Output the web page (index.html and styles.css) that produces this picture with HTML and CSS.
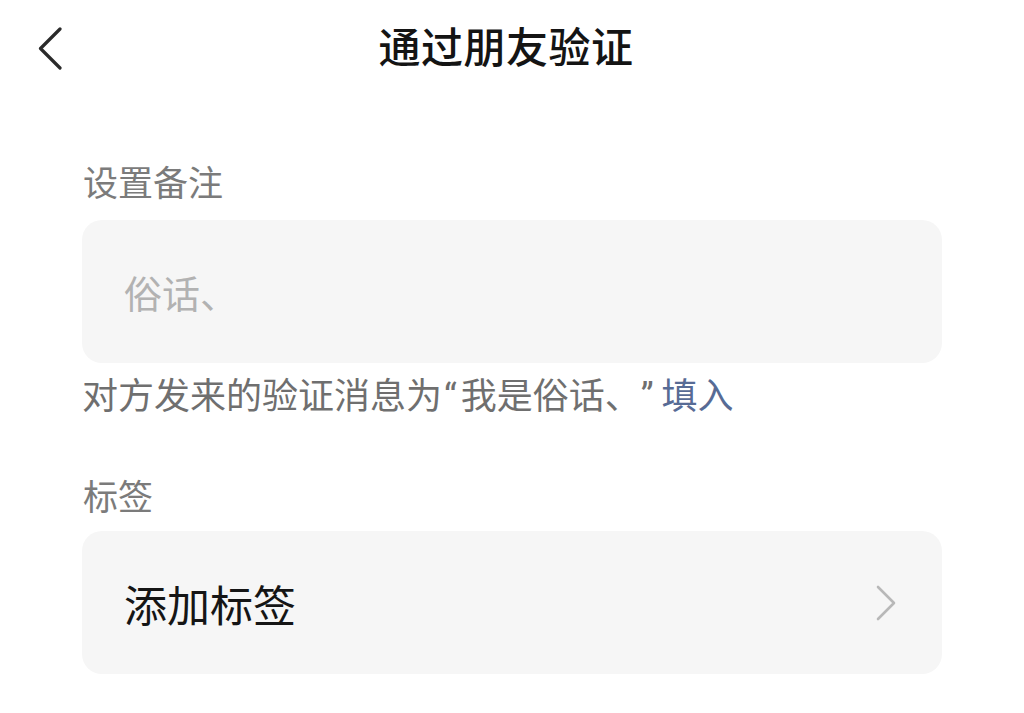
FILE: index.html
```html
<!DOCTYPE html>
<html lang="zh-CN">
<head>
<meta charset="utf-8">
<title>通过朋友验证</title>
<link rel="stylesheet" href="styles.css">
</head>
<body>
<header class="nav">
  <button class="back" aria-label="返回">
    <svg width="26" height="43" viewBox="0 0 26 43"><polyline points="23,2 3.5,21.5 23,41" fill="none" stroke="#2a2a2a" stroke-width="3.2" stroke-linecap="round" stroke-linejoin="round"/></svg>
  </button>
  <h1 class="title">通过朋友验证</h1>
  <span class="spacer"></span>
</header>
<main class="content">
  <div class="label">设置备注</div>
  <div class="field">
    <span class="placeholder">俗话、</span>
  </div>
  <p class="hint">对方发来的验证消息为<span class="oq">“</span>我是俗话、<span class="cq">”</span> <a class="link">填入</a></p>

  <div class="label label-tags">标签</div>
  <div class="field row">
    <span class="row-text">添加标签</span>
    <svg class="chev" width="22" height="36" viewBox="0 0 22 36"><polyline points="3,2 19,18 3,34" fill="none" stroke="#b8b8b8" stroke-width="2.6" stroke-linecap="round" stroke-linejoin="round"/></svg>
  </div>
</main>
</body>
</html>
```

FILE: styles.css
```css
html, body {
  margin: 0;
  padding: 0;
  background: #ffffff;
}
body {
  font-family: "Roboto", "Noto Sans CJK SC", sans-serif;
  color: #111;
  text-spacing-trim: space-all;
}
.nav {
  height: 98px;
  display: grid;
  grid-template-columns: 88px 1fr 100px;
  align-items: center;
}
.back {
  border: 0;
  background: none;
  padding: 0;
  margin-left: 37px;
  margin-top: -2px;
  width: 26px;
  height: 43px;
  display: flex;
}
.title {
  margin: 0;
  text-align: center;
  font-size: 42px;
  font-weight: 500;
  line-height: 50px;
  color: #141414;
  letter-spacing: 0.5px;
}
.content {
  padding: 0 82px;
}
.label {
  margin-top: 66px;
  font-size: 35px;
  line-height: 42px;
  color: #7b7b7b;
  padding-left: 1px;
}
.field {
  margin-top: 14px;
  height: 143px;
  background: #f6f6f6;
  border-radius: 20px;
  display: flex;
  align-items: center;
  padding: 0 45px 0 42px;
}
.placeholder {
  font-size: 38px;
  color: #b2b2b2;
}
.hint {
  margin: 9px 0 0;
  font-size: 36px;
  line-height: 50px;
  color: #6f6f6f;
  padding-left: 0;
}
.oq {
  margin-left: 2px;
  margin-right: 4px;
}
.cq {
  margin-left: 0;
}
.link {
  color: #576b95;
  margin-left: -1px;
}
.label-tags {
  margin-top: 56px;
}
.label-tags + .row {
  margin-top: 11px;
}
.row {
  justify-content: space-between;
}
.row-text {
  font-size: 43px;
  color: #151515;
}
.chev {
  display: block;
}
```
